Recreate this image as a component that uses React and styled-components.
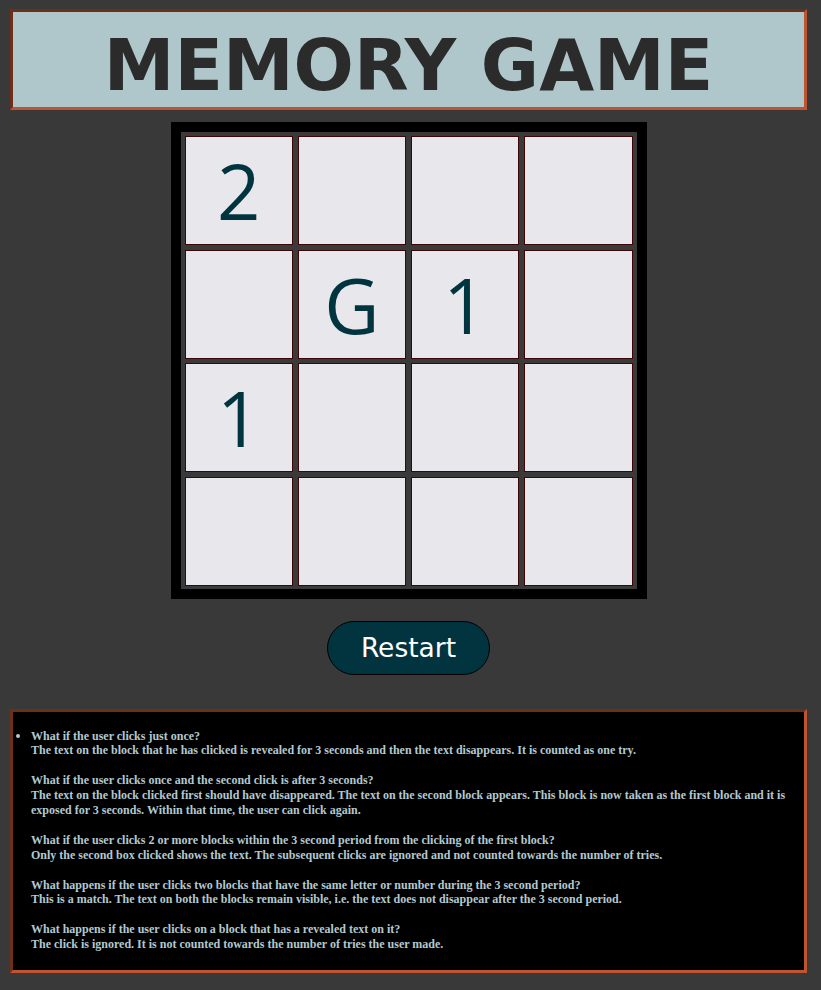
import React, { useState } from 'react';
import styled, { createGlobalStyle } from 'styled-components';

const board = [
    '2', '', '', '',
    '', 'G', '1', '',
    '1', '', '', '',
    '', '', '', ''
];

const faq = [
    {
        q: 'What if the user clicks just once?',
        a: 'The text on the block that he has clicked is revealed for 3 seconds and then the text disappears. It is counted as one try.'
    },
    {
        q: 'What if the user clicks once and the second click is after 3 seconds?',
        a: 'The text on the block clicked first should have disappeared. The text on the second block appears. This block is now taken as the first block and it is exposed for 3 seconds. Within that time, the user can click again.'
    },
    {
        q: 'What if the user clicks 2 or more blocks within the 3 second period from the clicking of the first block?',
        a: 'Only the second box clicked shows the text. The subsequent clicks are ignored and not counted towards the number of tries.'
    },
    {
        q: 'What happens if the user clicks two blocks that have the same letter or number during the 3 second period?',
        a: 'This is a match. The text on both the blocks remain visible, i.e. the text does not disappear after the 3 second period.'
    },
    {
        q: 'What happens if the user clicks on a block that has a revealed text on it?',
        a: 'The click is ignored. It is not counted towards the number of tries the user made.'
    }
];

const App = () => {
    const [cells] = useState(board);

    return (
        <Page>
            <GlobalStyle />
            <Header>
                <Title>MEMORY GAME</Title>
            </Header>
            <Board>
                <Grid>
                    {cells.map((c, i) => (
                        <Cell key={i}>{c}</Cell>
                    ))}
                </Grid>
            </Board>
            <RestartButton>Restart</RestartButton>
            <Rules>
                <RuleList>
                    <li>
                        {faq.map((item, i) => (
                            <React.Fragment key={i}>
                                {i > 0 && <><br /><br /></>}
                                {item.q}<br />
                                {item.a}
                            </React.Fragment>
                        ))}
                    </li>
                </RuleList>
            </Rules>
        </Page>
    );
};

let GlobalStyle = createGlobalStyle`
    html, body {
        margin : 0;
        background : #393939;
    }
`;

let Page = styled.div`
    width : 797px;
    padding : 9px 0 18px 10px;
    display : flex;
    flex-direction : column;
    align-items : center;
`;

let Header = styled.div`
    box-sizing : border-box;
    width : 100%;
    height : 101px;
    border : 3px inset #bf5530;
    background : #afc6cb;
    display : flex;
    align-items : center;
    justify-content : center;
    padding-top : 11px;
`;

let Title = styled.h1`
    margin : 0;
    font-family : "DejaVu Sans", Verdana, sans-serif;
    font-weight : bold;
    font-size : 71px;
    color : #2b2b2b;
`;

let Board = styled.div`
    margin-top : 12px;
    background : #000;
    padding : 10px;
`;

let Grid = styled.div`
    width : 448px;
    padding : 4px 4px 3px;
    background : #3a3a3a;
    display : grid;
    grid-template-columns : repeat(4, 1fr);
    gap : 4.5px;
`;

let Cell = styled.div`
    box-sizing : border-box;
    height : 109px;
    border : 1px solid #3d0505;
    background : #e8e7ec;
    display : flex;
    align-items : center;
    justify-content : center;
    font-family : "Open Sans", sans-serif;
    font-size : 76px;
    color : #00343f;
`;

let RestartButton = styled.button`
    margin-top : 22px;
    width : 163px;
    height : 54px;
    border : 1px solid #000;
    border-radius : 28px;
    background : #023440;
    color : #fff;
    font-family : "DejaVu Sans", Verdana, sans-serif;
    font-size : 26.5px;
    cursor : pointer;
`;

let Rules = styled.div`
    box-sizing : border-box;
    width : 100%;
    margin-top : 34px;
    border : 3px inset #bf5530;
    background : #000;
    padding : 17px 18px 18px 0;
`;

let RuleList = styled.ul`
    margin : 0;
    padding-left : 18px;
    font-family : "Liberation Serif", "Times New Roman", serif;
    font-weight : bold;
    font-size : 12px;
    line-height : 14.9px;
    color : #b3c8cf;

    li::marker {
        font-size : 14px;
    }
`;

export default App;
